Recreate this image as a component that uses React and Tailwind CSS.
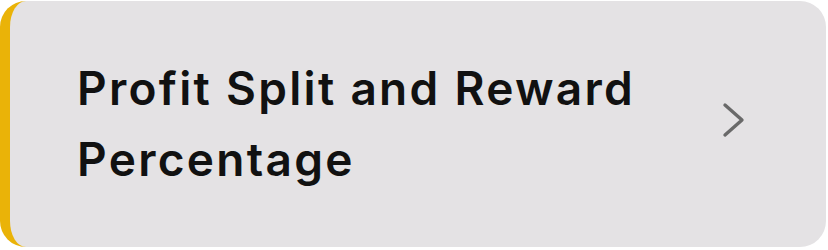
export default function App() {
  return (
    <div className="w-[828px] h-[250px] bg-white pt-[1px] pr-[2px]">
      <div className="h-[246px] rounded-[26px] border-l-[10px] border-[#eab308] bg-[#e4e2e4] flex items-center justify-between pl-[67px] pr-[80px]">
        <div
          className="text-[46px] leading-[71px] font-semibold tracking-[2.3px] text-[#111111] w-[620px]"
          style={{ fontFamily: "Inter, 'Noto Sans', sans-serif" }}
        >
          Profit Split and Reward Percentage
        </div>
        <svg width="24" height="36" viewBox="0 0 24 36" fill="none" className="mt-[-8px]">
          <path d="M3 3 L20 18 L3 33" stroke="#696969" strokeWidth="3.4" strokeLinecap="round" strokeLinejoin="round" />
        </svg>
      </div>
    </div>
  );
}
